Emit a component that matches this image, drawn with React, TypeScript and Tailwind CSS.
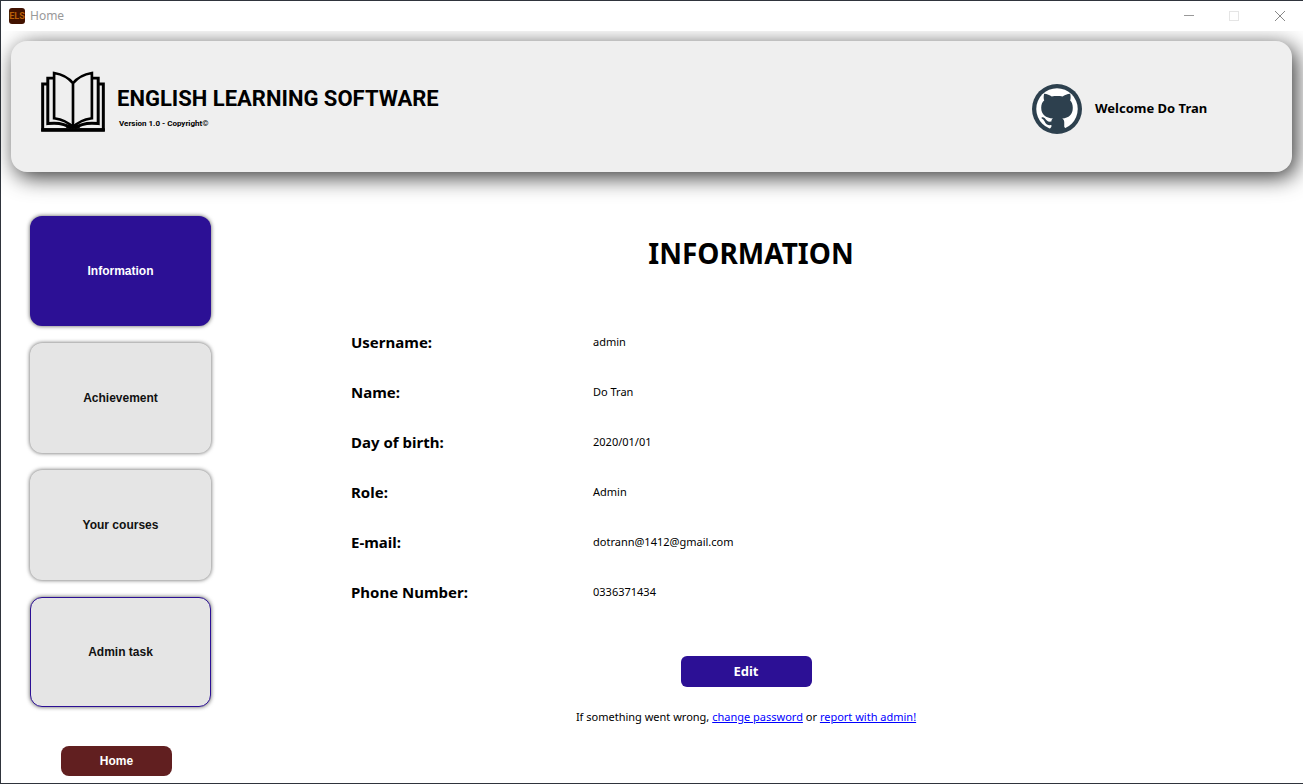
import React, { useState } from "react";
import clsx from "clsx";

const tasks = ["Information", "Achievement", "Your courses", "Admin task"];

const profile = [
  { label: "Username:", value: "admin" },
  { label: "Name:", value: "Do Tran" },
  { label: "Day of birth:", value: "2020/01/01" },
  { label: "Role:", value: "Admin" },
  { label: "E-mail:", value: "dotrann@1412@gmail.com" },
  { label: "Phone Number:", value: "0336371434" },
];

function TitleBar() {
  return (
    <div className="relative z-10 flex h-[30px] items-center bg-white pl-2">
      <span className="flex size-4 items-center justify-center rounded-[3px] bg-[#421200] font-['Roboto',sans-serif] text-[9px] leading-none font-bold text-[#b86008]">
        ELS
      </span>
      <span className="ml-[5px] flex-1 text-[12px] text-[#999999]">Home</span>
      <button type="button" aria-label="Minimize" className="flex h-full w-11 items-center justify-center">
        <svg width="10" height="10" viewBox="0 0 10 10" fill="none" stroke="#999" shapeRendering="crispEdges">
          <path d="M0 4.5H10" />
        </svg>
      </button>
      <button type="button" aria-label="Maximize" disabled className="flex h-full w-[46px] items-center justify-center">
        <svg width="10" height="10" viewBox="0 0 10 10" fill="none" stroke="#e5e5e5" shapeRendering="crispEdges">
          <rect x="0.5" y="0.5" width="9" height="9" />
        </svg>
      </button>
      <button type="button" aria-label="Close" className="flex h-full w-[46px] items-center justify-center">
        <svg width="10" height="10" viewBox="0 0 10 10" fill="none" stroke="#888">
          <path d="M0 0L10 10M10 0L0 10" />
        </svg>
      </button>
    </div>
  );
}

function BookLogo() {
  return (
    <svg width="64" height="61" viewBox="0 0 192 184" fill="none" stroke="#000" strokeWidth="9" aria-hidden="true">
      <path d="M20 39.500H4.500V177H187.500V39.500H172" />
      <path d="M0 178H192" strokeWidth="11" />
      <path d="M38 21.500H20V158.500C48 155 72 158 92 173" />
      <path d="M154 21.500H172V158.500C144 155 120 158 100 173" />
      <path d="M96 170C82 154 62 146 39 142.500V6C64 10 84 22 96 37C108 22 128 10 153 6V142.500C130 146 110 154 96 170V37" strokeWidth="8" />
      <path d="M74 172L88 158L96 164L104 158L118 172Z" fill="#000" stroke="none" />
    </svg>
  );
}

function Avatar() {
  return (
    <svg width="50" height="50" viewBox="0 0 152 152" aria-hidden="true">
      <circle cx="76" cy="76" r="76" fill="#2d404e" />
      <circle cx="76" cy="76" r="63" fill="#fff" />
      <path
        fill="#2d404e"
        d="M37 30C46 31 54 34 60 38C70 36 83 36 93 38C99 34 107 31 116 30C118 37 118 45 116 50C121 55 124 62 124 72C124 94 112 102 92 105C96 108 98 111 98 116V130L106 142H50L59 130V125C48 127 42 122 38 113C36 109 33 106 29 104C28 101 34 100 39 104C44 110 47 116 59 114C59 110 60 107 64 105C42 102 28 94 28 72C28 62 31 55 37 50C35 45 35 37 37 30Z"
      />
    </svg>
  );
}

function Header() {
  return (
    <header className="mt-2.5 mr-[11px] ml-2.5 flex items-start justify-between rounded-2xl bg-[#efefef] pt-[30px] pb-[38px] pl-[30px] shadow-[4px_5px_22px_rgba(0,0,0,0.8)]">
      <div className="flex items-start gap-3">
        <BookLogo />
        <div className="pt-[14px] font-['Roboto',sans-serif] font-bold">
          <h1 className="text-[22px] leading-7">ENGLISH LEARNING SOFTWARE</h1>
          <p className="mt-[3px] pl-0.5 text-[8px] leading-4">Version 1.0 - Copyright©</p>
        </div>
      </div>
      <div className="flex w-[260px] items-center gap-[13px] pt-[13px]">
        <Avatar />
        <span className="text-[13px] font-bold">Welcome Do Tran</span>
      </div>
    </header>
  );
}

export default function App() {
  const [active, setActive] = useState("Information");

  return (
    <div className="flex min-h-screen flex-col border-y border-l border-[#2f343c] bg-white font-['Noto_Sans','Open_Sans',sans-serif] text-black">
      <TitleBar />
      <Header />
      <div className="flex flex-1 pt-11">
        <nav className="ml-[29px] flex w-[181px] shrink-0 flex-col gap-[17px] pb-[7px] font-['Liberation_Sans',Arial,sans-serif] text-[12px] font-bold">
          {tasks.map((task) => (
            <button
              key={task}
              type="button"
              onClick={() => setActive(task)}
              className={clsx(
                "h-[110px] rounded-xl shadow-[0_0_4px_rgba(0,0,0,0.65)]",
                task === active ? "bg-[#2c1095] text-white" : "bg-[#e5e5e5] text-[#111111]",
                task === "Admin task" && task !== active && "border border-[#2c1095]",
              )}
            >
              {task}
            </button>
          ))}
          <button type="button" className="mt-[22px] ml-[31px] h-[30px] w-[111px] rounded-lg bg-[#611f20] text-white">
            Home
          </button>
        </nav>
        <main className="ml-[30px] flex flex-1 flex-col items-center pr-[52px]">
          <h2 className="pt-[15px] pl-2.5 text-[28px] leading-11 font-bold">INFORMATION</h2>
          <dl className="mt-[42px] w-full max-w-[790px]">
            {profile.map(({ label, value }) => (
              <div key={label} className="grid h-[50px] grid-cols-[242px_1fr] items-center">
                <dt className="text-[15px] font-bold">{label}</dt>
                <dd className="text-[11px]">{value}</dd>
              </div>
            ))}
          </dl>
          <button type="button" className="mt-[39px] h-[31px] w-[131px] rounded-md bg-[#2c1095] text-[13px] font-bold text-white">
            Edit
          </button>
          <p className="mt-5 text-[11px] leading-5">
            If something went wrong,{" "}
            <a href="#password" className="text-[#0000ff] underline">change password</a> or{" "}
            <a href="#report" className="text-[#0000ff] underline">report with admin!</a>
          </p>
        </main>
      </div>
    </div>
  );
}
